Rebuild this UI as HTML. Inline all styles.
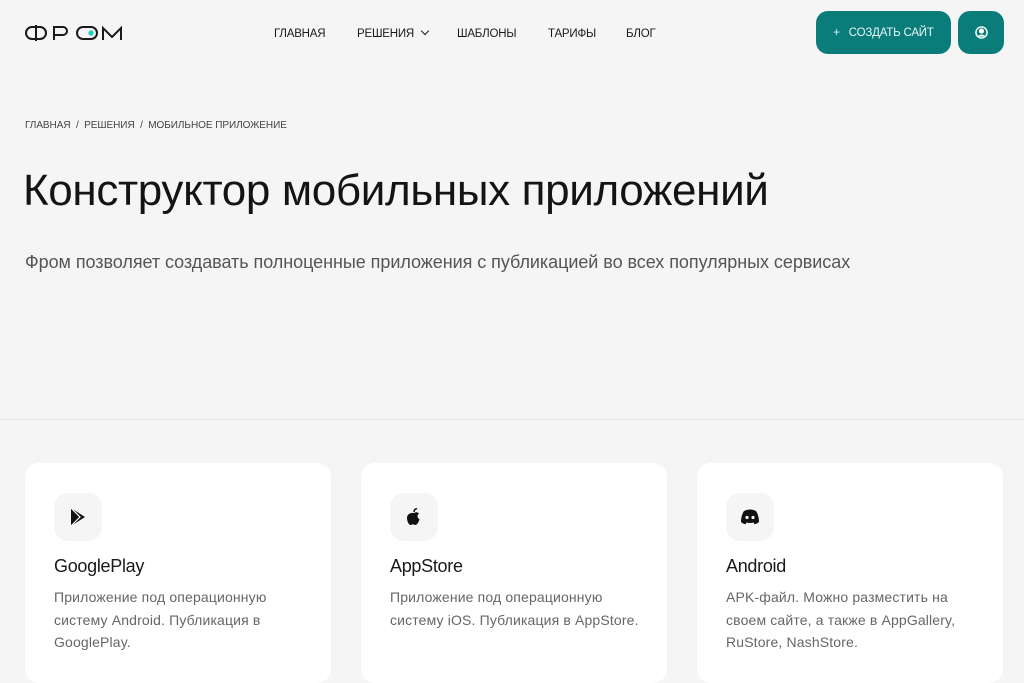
<!DOCTYPE html>
<html><head><meta charset="utf-8"><style>
*{margin:0;padding:0;box-sizing:border-box}
body{width:1024px;height:670px;overflow:hidden;background:#f5f5f5;font-family:"Liberation Sans",sans-serif;color:#1a1a1a;position:relative}
.nav a{position:absolute;top:28px;font-size:11.5px;color:#1a1a1a;text-decoration:none;letter-spacing:-0.2px}
.btn{position:absolute;top:11px;height:43px;background:#0a7d7b;border-radius:12px;color:#e8f5f4;font-size:11.5px;display:flex;align-items:center;justify-content:center;letter-spacing:-0.2px}
.crumb{position:absolute;left:25px;top:120px;font-size:10px;color:#444;letter-spacing:-0.05px}
h1{position:absolute;left:23px;top:166px;font-size:44px;font-weight:normal;letter-spacing:-0.35px;color:#141414}
.sub{position:absolute;left:25px;top:252px;font-size:18px;color:#555;letter-spacing:-0.05px}
.line{position:absolute;left:0;top:419px;width:1024px;height:1px;background:#e3e3e3}
.card{position:absolute;top:463px;width:306px;height:220px;background:#fff;border-radius:14px}
.ic{position:absolute;left:29px;top:30px;width:48px;height:48px;background:#f5f5f5;border-radius:14px;display:flex;align-items:center;justify-content:center}
.card h3{position:absolute;left:29px;top:93px;font-size:18px;font-weight:normal;letter-spacing:-0.3px;color:#1a1a1a}
.card p{position:absolute;left:29px;top:123px;width:260px;font-size:14px;line-height:22.5px;color:#666;letter-spacing:0.15px}
</style></head><body>
<svg style="position:absolute;left:25px;top:25px" width="99" height="16" viewBox="0 0 99 16" fill="none" stroke="#1a1a1a" stroke-width="2">
<rect x="1" y="2" width="20" height="12" rx="6"/><line x1="11" y1="0" x2="11" y2="16"/>
<path d="M29 15V2h9a4 4 0 0 1 0 8h-9"/>
<rect x="52" y="2" width="20" height="12" rx="6"/>
<path d="M78 15V3l9 9 9-9v12"/>
<circle cx="66" cy="8" r="2.6" fill="#19d1be" stroke="none"/>
</svg>
<div class="nav"><a style="left:274px">ГЛАВНАЯ</a><a style="left:357px">РЕШЕНИЯ <span style="display:inline-block;width:6px;height:6px;border-right:1.3px solid #222;border-bottom:1.3px solid #222;transform:rotate(45deg);margin:0 0 3px 5px"></span></a><a style="left:457px">ШАБЛОНЫ</a><a style="left:548px">ТАРИФЫ</a><a style="left:626px">БЛОГ</a></div>
<div class="btn" style="left:816px;width:135px">+&nbsp;&nbsp;&nbsp;СОЗДАТЬ САЙТ</div>
<div class="btn" style="left:958px;width:46px"><svg width="13" height="13" viewBox="0 0 14 14" fill="none" stroke="#fff" stroke-width="1.5"><circle cx="7" cy="7" r="6"/><circle cx="7" cy="5.5" r="2" fill="#fff"/><path d="M3.5 11.5c1-2 6-2 7 0" fill="#fff"/></svg></div>
<div class="crumb">ГЛАВНАЯ &nbsp;/&nbsp; РЕШЕНИЯ &nbsp;/&nbsp; МОБИЛЬНОЕ ПРИЛОЖЕНИЕ</div>
<h1>Конструктор мобильных приложений</h1>
<div class="sub">Фром позволяет создавать полноценные приложения с публикацией во всех популярных сервисах</div>
<div class="line"></div>
<div class="card" style="left:25px"><div class="ic"><svg width="18" height="20" viewBox="0 0 18 20"><path d="M2 1l14 9-14 9z" fill="#111"/><path d="M2 1l9 9-9 9" stroke="#fff" stroke-width="1.2" fill="none"/></svg></div><h3>GooglePlay</h3><p>Приложение под операционную систему Android. Публикация в GooglePlay.</p></div>
<div class="card" style="left:361px"><div class="ic"><svg width="16" height="19" viewBox="0 0 16 19"><path d="M8 5c1.5-1 3.5-1.2 5 .5-2 1.5-2 4.5.5 5.8-.7 2.5-2.3 5.7-4 5.7-1 0-1.3-.6-2.5-.6s-1.5.6-2.5.6C2.5 17 1 12.5 1 10c0-3.5 3-5.5 7-5z" fill="#111"/><path d="M8 4c0-2 1-3 3-3.5" stroke="#111" stroke-width="1.5" fill="none"/></svg></div><h3>AppStore</h3><p>Приложение под операционную систему iOS. Публикация в AppStore.</p></div>
<div class="card" style="left:697px"><div class="ic"><svg width="20" height="16" viewBox="0 0 20 16"><path d="M4 2c2-1 4-1.5 6-1.5S14 1 16 2c2 3 3 7 3 11-1.5 1.2-3 2-4.5 2.3l-1-1.8c-2.3.6-4.7.6-7 0l-1 1.8C4 15 2.5 14.2 1 13c0-4 1-8 3-11z" fill="#111"/><circle cx="7" cy="8.5" r="1.6" fill="#f5f5f5"/><circle cx="13" cy="8.5" r="1.6" fill="#f5f5f5"/></svg></div><h3>Android</h3><p>APK-файл. Можно разместить на своем сайте, а также в AppGallery, RuStore, NashStore.</p></div>
</body></html>
